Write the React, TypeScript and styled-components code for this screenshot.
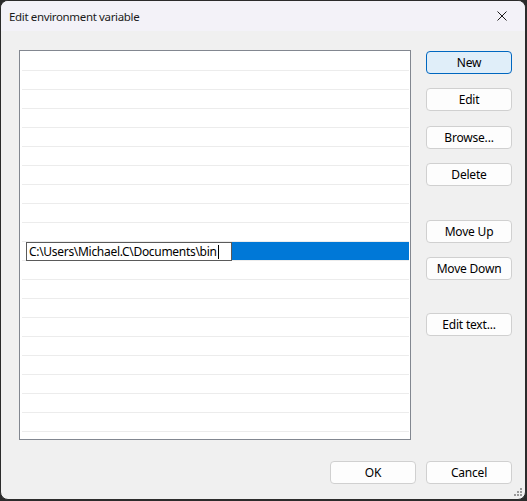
import React from 'react';
import styled, { createGlobalStyle } from 'styled-components';

const GlobalStyle = createGlobalStyle`
  html, body {
    margin: 0;
    padding: 0;
    background: #2b2b2b;
  }
  body {
    font-family: "Noto Sans", "Liberation Sans", sans-serif;
    font-size: 12px;
    color: #000;
  }
`;

const Window = styled.div`
  position: relative;
  box-sizing: border-box;
  width: 526px;
  height: 500px;
  border: 1px solid #2b2b2b;
  border-radius: 8px;
  overflow: hidden;
  background: #f0f0f0;
  display: flex;
  flex-direction: column;
`;

const TitleBar = styled.div`
  height: 30px;
  flex: none;
  display: flex;
  align-items: center;
  background: #f3f2f8;
  padding-left: 8px;
`;

const Title = styled.span`
  flex: 1;
  font-size: 11.5px;
  letter-spacing: -0.35px;
  color: #1b1b1b;
`;

const CloseButton = styled.div`
  width: 46px;
  height: 30px;
  display: flex;
  align-items: center;
  justify-content: center;
`;

const Body = styled.div`
  flex: 1;
  display: flex;
  flex-direction: column;
  padding: 19px 13px 15px 18px;
`;

const Main = styled.div`
  display: flex;
  gap: 15px;
`;

const ListBox = styled.div`
  box-sizing: border-box;
  width: 392px;
  height: 390px;
  border: 1px solid #828790;
  background: #fff;
  padding: 1px 1px 0 1px;
`;

const Row = styled.div<{ $selected?: boolean }>`
  height: 18px;
  border-bottom: 1px solid #ececec;
  margin-left: 1px;
  display: flex;
  padding-left: ${p => (p.$selected ? '4px' : '0')};
`;

const Highlight = styled.div`
  flex: 1;
  background: #0078d7;
  display: flex;
`;

const EditBox = styled.div`
  box-sizing: border-box;
  height: 19px;
  width: 206px;
  border: 1px solid #5a5a5a;
  background: #fff;
  padding: 0 2px;
  display: flex;
  align-items: center;
  font-size: 12px;
  letter-spacing: -0.3px;
  white-space: nowrap;
`;

const Caret = styled.span`
  display: inline-block;
  width: 1px;
  height: 14px;
  background: #000;
  margin-left: 1px;
`;

const ButtonColumn = styled.div`
  display: flex;
  flex-direction: column;
  padding-top: 1px;
`;

const Button = styled.button<{ $default?: boolean; $gap?: number }>`
  box-sizing: border-box;
  width: 86px;
  height: 23px;
  margin: ${p => p.$gap ?? 0}px 0 0 0;
  padding: 0;
  border-radius: 4px;
  border: 1px solid ${p => (p.$default ? '#0067c0' : '#d0d0d0')};
  background: ${p => (p.$default ? '#e0eef9' : '#fdfdfd')};
  font-family: "Noto Sans", "Liberation Sans", sans-serif;
  font-size: 12px;
  letter-spacing: -0.2px;
  color: #000;
  line-height: 21px;
`;

const Footer = styled.div`
  display: flex;
  justify-content: flex-end;
  gap: 10px;
  margin-top: 21px;
`;

const Grip = styled.svg`
  position: absolute;
  right: 2px;
  bottom: 2px;
`;

const ROWS = 20;
const SELECTED = 10;

export default function App() {
  return (
    <>
      <GlobalStyle />
      <Window>
        <TitleBar>
          <Title>Edit environment variable</Title>
          <CloseButton>
            <svg width="10" height="10" viewBox="0 0 10 10">
              <path d="M0.5 0.5 L9.5 9.5 M9.5 0.5 L0.5 9.5" stroke="#1b1b1b" strokeWidth="1" />
            </svg>
          </CloseButton>
        </TitleBar>
        <Body>
          <Main>
            <ListBox>
              {Array.from({ length: ROWS }, (_, i) =>
                i === SELECTED ? (
                  <Row key={i} $selected>
                    <Highlight>
                      <EditBox>
                        C:\Users\Michael.C\Documents\bin
                        <Caret />
                      </EditBox>
                    </Highlight>
                  </Row>
                ) : (
                  <Row key={i} />
                )
              )}
            </ListBox>
            <ButtonColumn>
              <Button $default>New</Button>
              <Button $gap={14}>Edit</Button>
              <Button $gap={15}>Browse...</Button>
              <Button $gap={14}>Delete</Button>
              <Button $gap={34}>Move Up</Button>
              <Button $gap={14}>Move Down</Button>
              <Button $gap={33}>Edit text...</Button>
            </ButtonColumn>
          </Main>
          <Footer>
            <Button>OK</Button>
            <Button>Cancel</Button>
          </Footer>
        </Body>
        <Grip width="10" height="10" viewBox="0 0 10 10">
          <g fill="#9a9a9a">
            <rect x="7" y="1" width="2" height="2" />
            <rect x="4" y="4" width="2" height="2" />
            <rect x="7" y="4" width="2" height="2" />
            <rect x="1" y="7" width="2" height="2" />
            <rect x="4" y="7" width="2" height="2" />
            <rect x="7" y="7" width="2" height="2" />
          </g>
        </Grip>
      </Window>
    </>
  );
}
